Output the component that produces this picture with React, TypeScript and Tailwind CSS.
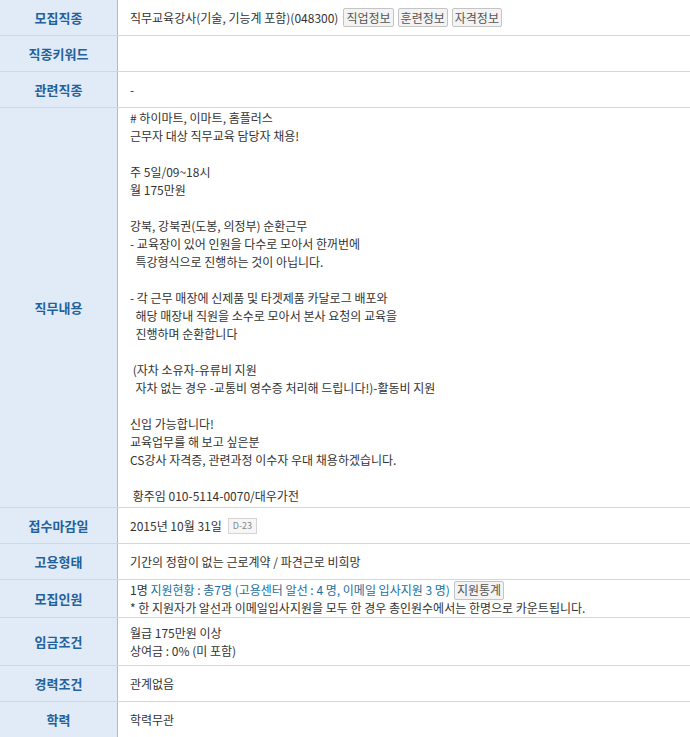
import type { ReactNode } from 'react';

const font = { fontFamily: '"Noto Sans CJK KR", "Noto Sans", sans-serif' };

const duties = [
  '# 하이마트, 이마트, 홈플러스',
  '근무자 대상 직무교육 담당자 채용!',
  '',
  '주 5일/09~18시',
  '월 175만원',
  '',
  '강북, 강북권(도봉, 의정부) 순환근무',
  '- 교육장이 있어 인원을 다수로 모아서 한꺼번에',
  '  특강형식으로 진행하는 것이 아닙니다.',
  '',
  '- 각 근무 매장에 신제품 및 타겟제품 카달로그 배포와',
  '  해당 매장내 직원을 소수로 모아서 본사 요청의 교육을',
  '  진행하며 순환합니다',
  '',
  ' (자차 소유자-유류비 지원',
  '  자차 없는 경우 -교통비 영수증 처리해 드립니다!)-활동비 지원',
  '',
  '신입 가능합니다!',
  '교육업무를 해 보고 싶은분',
  'CS강사 자격증, 관련과정 이수자 우대 채용하겠습니다.',
  '',
  ' 황주임 010-5114-0070/대우가전',
];

function SmallButton({ children }: { children: ReactNode }) {
  return (
    <span className="inline-flex items-center h-[19px] px-[2px] border border-[#c4c4c4] rounded-[2px] bg-[#f3f3f3] text-[12px] leading-none text-[#555]">
      {children}
    </span>
  );
}

function Row({ label, children, cellClass = 'h-[35px] flex items-center' }: { label: string; children?: ReactNode; cellClass?: string }) {
  return (
    <div className="flex border-b border-[#d6d6d6]">
      <div className="w-[118px] shrink-0 flex items-center justify-center bg-[#e1ebf7] border-r border-[#a9bbd3] text-[13px] font-bold text-[#22619b]">
        {label}
      </div>
      <div className={`flex-1 pl-[12px] pr-2 text-[12px] leading-[18px] text-[#333] bg-white ${cellClass}`}>
        {children}
      </div>
    </div>
  );
}

export default function App() {
  return (
    <div style={font} className="w-[690px] h-[737px] overflow-hidden bg-white">
      <Row label="모집직종" cellClass="h-[35px] flex items-center gap-[4px]">
        <span className="mr-[1px]">직무교육강사(기술, 기능계 포함)(048300)</span>
        <SmallButton>직업정보</SmallButton>
        <SmallButton>훈련정보</SmallButton>
        <SmallButton>자격정보</SmallButton>
      </Row>
      <Row label="직종키워드" />
      <Row label="관련직종">-</Row>
      <Row label="직무내용" cellClass="pt-[1px] pb-[2px] whitespace-pre">
        {duties.map((line, i) => (
          <div key={i} className="h-[18px]">{line}</div>
        ))}
      </Row>
      <Row label="접수마감일">
        <span>2015년 10월 31일</span>
        <span className="ml-[6px] inline-flex items-center h-[16px] px-[4px] border border-[#d4d4d4] bg-[#f6f6f6] text-[9px] text-[#888] leading-none">D-23</span>
      </Row>
      <Row label="고용형태">기간의 정함이 없는 근로계약 / 파견근로 비희망</Row>
      <Row label="모집인원" cellClass="h-[37px] flex flex-col justify-center leading-[17px]">
        <div className="flex items-center h-[17px]">
          <span>1명&nbsp;</span>
          <span className="text-[#1c6f9c]">지원현황 : 총7명 (고용센터 알선 : 4 명, 이메일 입사지원 3 명)</span>
          <span className="ml-[4px] flex"><SmallButton>지원통계</SmallButton></span>
        </div>
        <div className="h-[17px]">* 한 지원자가 알선과 이메일입사지원을 모두 한 경우 총인원수에서는 한명으로 카운트됩니다.</div>
      </Row>
      <Row label="임금조건" cellClass="h-[47px] flex flex-col justify-center">
        <div className="h-[18px]">월급 175만원 이상</div>
        <div className="h-[18px]">상여금 : 0% (미 포함)</div>
      </Row>
      <Row label="경력조건">관계없음</Row>
      <Row label="학력">학력무관</Row>
    </div>
  );
}
